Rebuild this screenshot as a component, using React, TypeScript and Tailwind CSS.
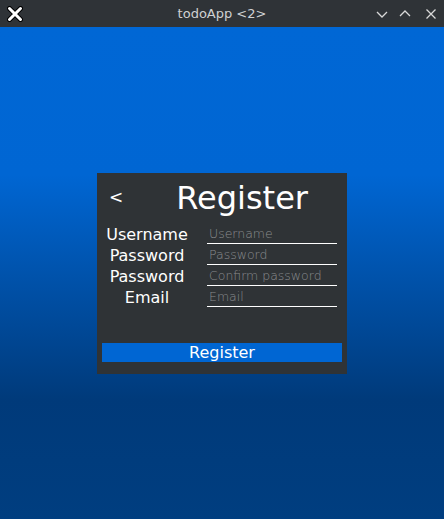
import React from "react";

const rows = [
  { label: "Username", hint: "Username" },
  { label: "Password", hint: "Password" },
  { label: "Password", hint: "Confirm password" },
  { label: "Email", hint: "Email" },
];

const TitleBar = () => (
  <div className="h-[27px] flex items-center bg-[#2f3337] relative shrink-0">
    <svg width="16" height="16" viewBox="0 0 16 16" className="ml-[7px]">
      <path d="M2.5 2.5 L13.5 13.5 M13.5 2.5 L2.5 13.5" stroke="#000" strokeWidth="5" strokeLinecap="round" />
      <path d="M2.5 2.5 L13.5 13.5 M13.5 2.5 L2.5 13.5" stroke="#fff" strokeWidth="3" strokeLinecap="round" />
    </svg>
    <div className="absolute left-0 right-0 text-center text-[13px] text-[#cfd1d3]" style={{ fontFamily: '"DejaVu Sans", sans-serif' }}>
      todoApp &lt;2&gt;
    </div>
    <div className="ml-auto mr-[7px] flex items-center gap-[11px]">
      <svg width="12" height="12" viewBox="0 0 12 12">
        <path d="M1 4 L6 9 L11 4" fill="none" stroke="#d8d8d8" strokeWidth="1.3" />
      </svg>
      <svg width="12" height="12" viewBox="0 0 12 12">
        <path d="M1 8 L6 3 L11 8" fill="none" stroke="#d8d8d8" strokeWidth="1.3" />
      </svg>
      <svg width="12" height="12" viewBox="0 0 12 12" className="ml-[3px]">
        <path d="M1.5 1.5 L10.5 10.5 M10.5 1.5 L1.5 10.5" fill="none" stroke="#d8d8d8" strokeWidth="1.3" />
      </svg>
    </div>
  </div>
);

export default function App() {
  return (
    <div className="w-[444px] h-[519px] flex flex-col" style={{ fontFamily: '"DejaVu Sans", sans-serif' }}>
      <TitleBar />
      <div className="flex-1 flex items-center justify-center bg-[linear-gradient(to_bottom,#0067d5_0%,#0066d3_30%,#003a7a_76%,#003e80_100%)]">
        <div className="w-[250px] h-[201px] bg-[#2f3336] flex flex-col px-[5px]">
          <div className="h-[50px] flex items-center text-white">
            <span className="ml-[7px] text-[17px]">&lt;</span>
            <span className="ml-[53px] text-[32px] leading-none">Register</span>
          </div>
          {rows.map((r, i) => (
            <div key={i} className="h-[21px] flex items-center">
              <div className="w-[90px] pt-[3px] text-center text-white text-[16px] leading-none">{r.label}</div>
              <div className="ml-[15px] w-[130px] h-[21px] border-b border-white flex items-center">
                <span className="ml-[2px] pt-[4px] text-[12.5px] font-extralight text-[#8a8c8e] leading-none">{r.hint}</span>
              </div>
            </div>
          ))}
          <button className="mt-[36px] h-[19px] w-[240px] pt-[2px] bg-[#0066d3] text-white text-[16px] leading-none flex items-center justify-center">
            Register
          </button>
        </div>
      </div>
    </div>
  );
}
